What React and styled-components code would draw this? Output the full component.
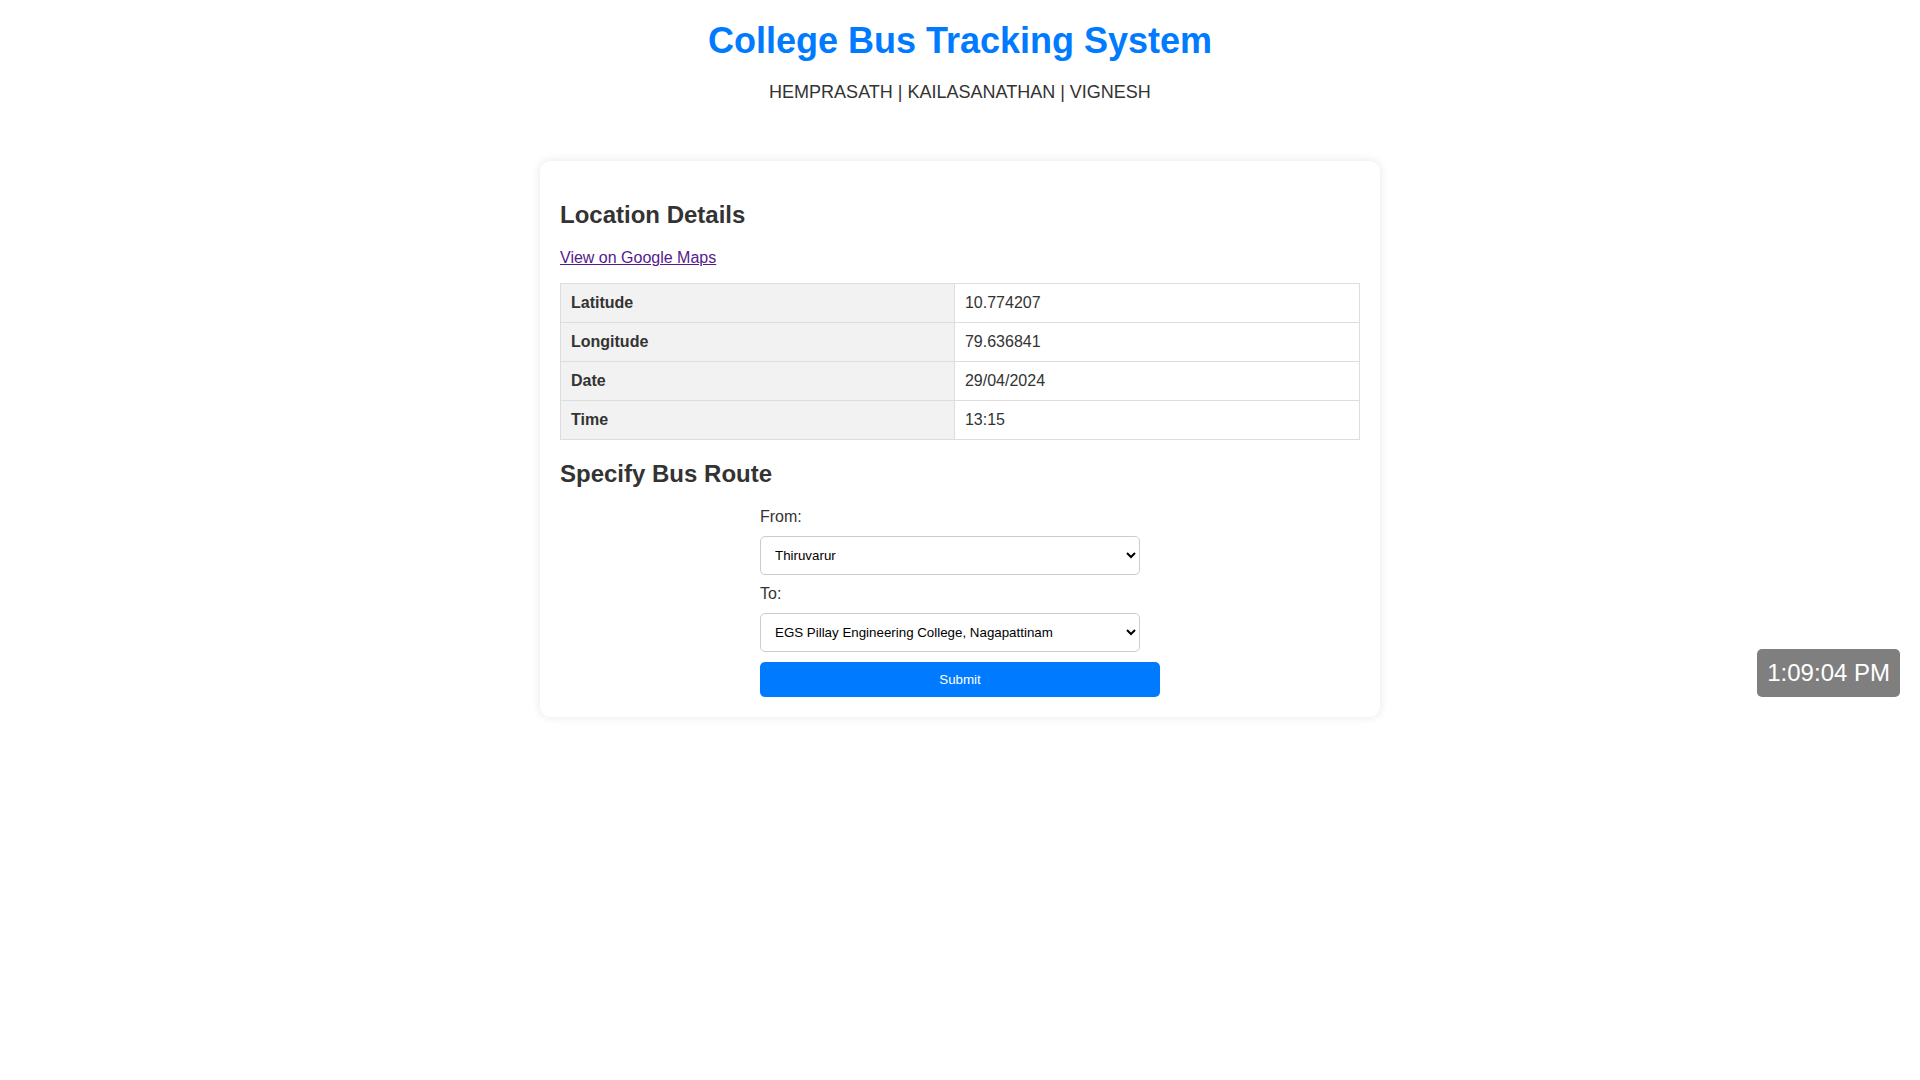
import React from 'react';
import styled, { createGlobalStyle } from 'styled-components';

const GlobalStyle = createGlobalStyle`
  body {
    margin: 0;
    font-family: "Liberation Sans", Arial, sans-serif;
    background: #fff;
    color: #333;
  }
`

const Page = styled.div`
  position: relative;
  padding-bottom: 20px;
`

const Header = styled.header`
  text-align: center;
  padding: 20px 20px 0;
`

const Title = styled.h1`
  margin: 0 0 20px;
  font-size: 36px;
  color: #007bff;
`

const Team = styled.p`
  margin: 0;
  font-size: 18px;
  color: #333;
`

const Card = styled.main`
  max-width: 800px;
  margin: 58px auto 0;
  padding: 20px;
  background: #fff;
  border-radius: 10px;
  box-shadow: 0 0 10px rgba(0, 0, 0, 0.1);
`

const Heading = styled.h2`
  font-size: 24px;
  margin: 20px 0;
  color: #333;
`

const MapLink = styled.a`
  font-size: 16px;
  color: #551a8b;
`

const LinkRow = styled.p`
  margin: 16px 0;
`

const Table = styled.table`
  width: 100%;
  border-collapse: collapse;
  font-size: 16px;
`

const HeadCell = styled.th`
  text-align: left;
  padding: 10px;
  border: 1px solid #ddd;
  background: #f2f2f2;
  color: #333;
`

const Cell = styled.td`
  padding: 10px;
  border: 1px solid #ddd;
  color: #333;
`

const Form = styled.form`
  width: 400px;
  margin: 0 auto;
  display: flex;
  flex-direction: column;
  gap: 10px;
`

const Label = styled.label`
  font-size: 16px;
  color: #333;
`

const Select = styled.select`
  width: 380px;
  padding: 10px;
  border: 1px solid #ccc;
  border-radius: 5px;
  font-family: "Liberation Sans", Arial, sans-serif;
  font-size: 13.333px;
  background: #fff;
  color: #000;
`

const Submit = styled.button`
  width: 100%;
  padding: 10px;
  border: none;
  border-radius: 5px;
  background: #007bff;
  color: #fff;
  font-family: "Liberation Sans", Arial, sans-serif;
  font-size: 13.333px;
  cursor: pointer;
`

const Clock = styled.div`
  position: absolute;
  right: 20px;
  bottom: 40px;
  padding: 10px;
  background: rgba(0, 0, 0, 0.5);
  color: #fff;
  font-size: 24px;
  border-radius: 5px;
`

const rows = [
  ['Latitude', '10.774207'],
  ['Longitude', '79.636841'],
  ['Date', '29/04/2024'],
  ['Time', '13:15'],
]

const App = () => {
  return (
    <Page>
      <GlobalStyle />
      <Header>
        <Title>College Bus Tracking System</Title>
        <Team>HEMPRASATH | KAILASANATHAN | VIGNESH</Team>
      </Header>
      <Card>
        <Heading>Location Details</Heading>
        <LinkRow>
          <MapLink href="#">View on Google Maps</MapLink>
        </LinkRow>
        <Table>
          <tbody>
            {rows.map(([k, v]) => (
              <tr key={k}>
                <HeadCell>{k}</HeadCell>
                <Cell>{v}</Cell>
              </tr>
            ))}
          </tbody>
        </Table>
        <Heading>Specify Bus Route</Heading>
        <Form onSubmit={e => e.preventDefault()}>
          <Label htmlFor="from">From:</Label>
          <Select id="from" defaultValue="Thiruvarur">
            <option>Thiruvarur</option>
            <option>Nagapattinam</option>
            <option>Mayiladuthurai</option>
          </Select>
          <Label htmlFor="to">To:</Label>
          <Select id="to" defaultValue="EGS Pillay Engineering College, Nagapattinam">
            <option>EGS Pillay Engineering College, Nagapattinam</option>
            <option>Thiruvarur</option>
          </Select>
          <Submit type="submit">Submit</Submit>
        </Form>
      </Card>
      <Clock>1:09:04 PM</Clock>
    </Page>
  )
}

export default App;
